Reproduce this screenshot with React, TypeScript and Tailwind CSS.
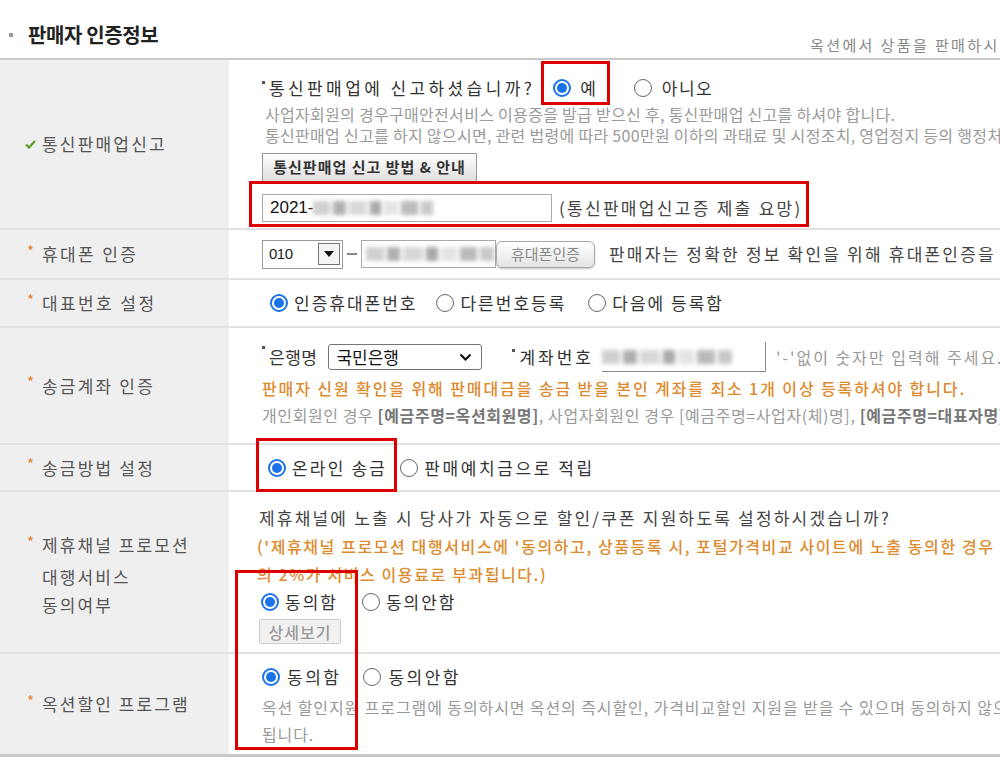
import React from 'react';

const Radio: React.FC<{ checked?: boolean }> = ({ checked }) =>
  checked ? (
    <span className="w-[18px] h-[18px] rounded-full border-2 border-[#1a73e8] bg-white flex items-center justify-center shrink-0">
      <span className="w-[10px] h-[10px] rounded-full bg-[#1a73e8]" />
    </span>
  ) : (
    <span className="w-[18px] h-[18px] rounded-full border-[1.5px] border-[#666] bg-white shrink-0" />
  );

const Option: React.FC<{ checked?: boolean; label: string; className?: string }> = ({ checked, label, className }) => (
  <span className={`flex items-center gap-[6px] ${className ?? ''}`}>
    <Radio checked={checked} />
    <span>{label}</span>
  </span>
);

const Dot = () => <span className="w-[3px] h-[3px] bg-[#555] self-start mt-[5px] mr-[4px] shrink-0" />;

const Star = () => <span className="text-[#e8822e] text-[15px] w-[15px] mb-[6px] shrink-0">*</span>;

// blurred-out personal data
const Blur: React.FC<{ w: number }> = ({ w }) => (
  <span className="flex items-center gap-[3px] blur-[2px]" style={{ width: w }}>
    <span className="w-[18px] h-[14px] bg-[#d0d0d0]" />
    <span className="w-[14px] h-[14px] bg-[#b0b0b0]" />
    <span className="w-[20px] h-[14px] bg-[#d8d8d8]" />
    <span className="w-[12px] h-[14px] bg-[#a9a9a9]" />
    <span className="w-[16px] h-[14px] bg-[#e4e4e4]" />
    <span className="w-[18px] h-[14px] bg-[#bababa]" />
    <span className="w-[14px] h-[14px] bg-[#c8c8c8]" />
  </span>
);

const App: React.FC = () => {
  return (
    <div className="relative w-[1000px] h-[771px] overflow-hidden bg-white whitespace-nowrap font-['Noto_Sans_CJK_KR','Malgun_Gothic',sans-serif] text-[#333]">
      {/* header */}
      <div className="flex items-end h-[58px]">
        <div className="w-[810px] shrink-0 flex items-center pl-[9px] pb-[8px]">
          <span className="w-[4px] h-[4px] bg-[#999] mr-[15px]" />
          <span className="text-[20px] font-bold tracking-[-0.4px] text-[#222]">판매자 인증정보</span>
        </div>
        <div className="pb-[2px] text-[15px] tracking-[2.4px] text-[#888]">옥션에서 상품을 판매하시려면 판매자 인증이 필요합니다.</div>
      </div>

      <div className="border-t-2 border-[#c9c9c9]">
        {/* 통신판매업신고 */}
        <div className="flex h-[170px] border-b-2 border-[#e2e2e2]">
          <div className="w-[229px] shrink-0 bg-[#efefef] flex items-center pl-[25px] text-[17px] tracking-[2.2px] text-[#555]">
            <svg width="11" height="9" viewBox="0 0 11 9" className="mr-[6px]">
              <path d="M1 4.5 L4 7.5 L10 1" fill="none" stroke="#5f9e2c" strokeWidth="2.2" />
            </svg>
            통신판매업신고
          </div>
          <div className="flex-1 pl-[33px] pt-[16px] flex flex-col">
            <div className="flex items-center h-[24px] text-[17px]">
              <Dot />
              <span className="tracking-[3.4px]">통신판매업에 신고하셨습니까?</span>
              <Option checked label="예" className="ml-[18px] gap-[9px]" />
              <Option label="아니오" className="ml-[38px] gap-[10px] tracking-[1.5px]" />
            </div>
            <div className="mt-[4px] text-[16px] leading-[21px] tracking-[0.3px] text-[#9a9a9a] pl-[3px]">
              <div>사업자회원의 경우구매안전서비스 이용증을 발급 받으신 후, 통신판매업 신고를 하셔야 합니다.</div>
              <div>통신판매업 신고를 하지 않으시면, 관련 법령에 따라 500만원 이하의 과태료 및 시정조치, 영업정지 등의 행정처분을 받을 수 있습니다.</div>
            </div>
            <button className="mt-[7px] w-[215px] h-[29px] border border-[#999] bg-gradient-to-b from-white to-[#dedede] text-[15px] font-bold tracking-[1px] text-[#333] flex items-center justify-center">
              통신판매업 신고 방법 &amp; 안내
            </button>
            <div className="mt-[12px] flex items-center">
              <div className="w-[290px] h-[28px] border border-[#aaa] flex items-center pl-[7px] text-[17px] text-[#111] font-['Liberation_Sans',sans-serif]">
                2021-
                <Blur w={120} />
              </div>
              <span className="ml-[7px] text-[17px] tracking-[2.3px] text-[#444]">(통신판매업신고증 제출 요망)</span>
            </div>
          </div>
        </div>

        {/* 휴대폰 인증 */}
        <div className="flex h-[50px] border-b-2 border-[#e2e2e2]">
          <div className="w-[229px] shrink-0 bg-[#efefef] flex items-center pl-[27px] text-[17px] tracking-[2.4px] text-[#555]">
            <Star />
            휴대폰 인증
          </div>
          <div className="flex-1 pl-[33px] flex items-center">
            <div className="w-[81px] h-[29px] border border-[#999] flex items-center justify-between pl-[6px] pr-[2px]">
              <span className="text-[15px] tracking-[-0.5px] text-[#222] font-['Liberation_Sans',sans-serif]">010</span>
              <span className="w-[22px] h-[22px] border border-[#777] bg-[#f4f4f4] flex items-center justify-center">
                <svg width="10" height="6" viewBox="0 0 10 6">
                  <path d="M0 0 H10 L5 6 Z" fill="#111" />
                </svg>
              </span>
            </div>
            <span className="mx-[4px] w-[10px] h-[1.5px] bg-[#888]" />
            <div className="w-[135px] h-[28px] border border-[#aaa] flex items-center pl-[4px]">
              <Blur w={128} />
            </div>
            <button className="w-[99px] h-[27px] rounded-[6px] border border-[#aaa] bg-gradient-to-b from-white to-[#e4e4e4] shadow-[0_1px_2px_rgba(0,0,0,0.25)] text-[15px] text-[#8a8a8a] flex items-center justify-center">
              휴대폰인증
            </button>
            <span className="ml-[14px] text-[17px] tracking-[2.2px] text-[#444]">판매자는 정확한 정보 확인을 위해 휴대폰인증을 하셔야 합니다.</span>
          </div>
        </div>

        {/* 대표번호 설정 */}
        <div className="flex h-[48px] border-b-2 border-[#e2e2e2]">
          <div className="w-[229px] shrink-0 bg-[#efefef] flex items-center pl-[27px] text-[17px] tracking-[2.4px] text-[#555]">
            <Star />
            대표번호 설정
          </div>
          <div className="flex-1 pl-[41px] flex items-center text-[17px] tracking-[2px]">
            <Option checked label="인증휴대폰번호" />
            <Option label="다른번호등록" className="ml-[19px] gap-[5px]" />
            <Option label="다음에 등록함" className="ml-[22px] gap-[5px]" />
          </div>
        </div>

        {/* 송금계좌 인증 */}
        <div className="flex h-[117px] border-b-2 border-[#e2e2e2]">
          <div className="w-[229px] shrink-0 bg-[#efefef] flex items-center pl-[27px] text-[17px] tracking-[2.2px] text-[#555]">
            <Star />
            송금계좌 인증
          </div>
          <div className="flex-1 pl-[33px] pt-[13px] flex flex-col">
            <div className="flex items-center h-[32px] text-[17px]">
              <Dot />
              <span className="tracking-[0.5px]">은행명</span>
              <div className="ml-[11px] w-[154px] h-[26px] border border-[#767676] rounded-[3px] flex items-center justify-between pl-[7px] pr-[9px]">
                <span className="text-[#111]">국민은행</span>
                <svg width="13" height="8" viewBox="0 0 13 8">
                  <path d="M1.5 1.5 L6.5 6.5 L11.5 1.5" fill="none" stroke="#111" strokeWidth="2.2" />
                </svg>
              </div>
              <span className="ml-[30px] flex">
                <Dot />
                <span className="tracking-[3px]">계좌번호</span>
              </span>
              <div className="ml-[8px] w-[164px] h-[30px] border-r border-b border-[#888] flex items-center">
                <Blur w={150} />
              </div>
              <span className="ml-[10px] text-[16px] tracking-[2px] text-[#999]">'-'없이 숫자만 입력해 주세요.</span>
            </div>
            <div className="mt-[4px] leading-[22px] text-[16px] tracking-[1.9px] font-medium text-[#dd8a2e]">
              판매자 신원 확인을 위해 판매대금을 송금 받을 본인 계좌를 최소 1개 이상 등록하셔야 합니다.
            </div>
            <div className="mt-[5px] leading-[22px] text-[16px] tracking-[0.6px] text-[#999]">
              개인회원인 경우 <b className="text-[#777]">[예금주명=옥션회원명]</b>, 사업자회원인 경우 [예금주명=사업자(체)명], <b className="text-[#777]">[예금주명=대표자명]</b>
            </div>
          </div>
        </div>

        {/* 송금방법 설정 */}
        <div className="flex h-[47px] border-b-2 border-[#e2e2e2]">
          <div className="w-[229px] shrink-0 bg-[#efefef] flex items-center pl-[27px] text-[17px] tracking-[2.2px] text-[#555]">
            <Star />
            송금방법 설정
          </div>
          <div className="flex-1 pl-[39px] flex items-center text-[17px] tracking-[2.2px]">
            <Option checked label="온라인 송금" />
            <Option label="판매예치금으로 적립" className="ml-[13px] gap-[5px] tracking-[2.6px]" />
          </div>
        </div>

        {/* 제휴채널 프로모션 */}
        <div className="flex h-[162px] border-b-2 border-[#e2e2e2]">
          <div className="w-[229px] shrink-0 bg-[#efefef] flex items-center pl-[27px] text-[17px] tracking-[2.1px] text-[#555]">
            <div className="flex flex-col leading-[28.5px] pt-[4px]">
              <div className="flex items-center">
                <Star />
                제휴채널 프로모션
              </div>
              <div className="pl-[15px]">대행서비스</div>
              <div className="pl-[15px]">동의여부</div>
            </div>
          </div>
          <div className="flex-1 pl-[30px] pt-[12px] flex flex-col">
            <div className="leading-[28px] text-[17px] tracking-[2.2px] text-[#444]">제휴채널에 노출 시 당사가 자동으로 할인/쿠폰 지원하도록 설정하시겠습니까?</div>
            <div className="leading-[28px] text-[16px] tracking-[1.6px] font-medium text-[#dd8a2e] -ml-[2px]">
              <div>('제휴채널 프로모션 대행서비스에 '동의하고, 상품등록 시, 포털가격비교 사이트에 노출 동의한 경우 판매금액</div>
              <div>의 2%가 서비스 이용료로 부과됩니다.)</div>
            </div>
            <div className="h-[28px] flex items-center text-[17px] tracking-[2px] pl-[2px]">
              <Option checked label="동의함" />
              <Option label="동의안함" className="ml-[24px] gap-[5px]" />
            </div>
            <button className="mt-[3px] w-[82px] h-[25px] border border-[#ccc] rounded-[2px] bg-[#f1f1f1] text-[16px] font-medium tracking-[1px] text-[#999] flex items-center justify-center">
              상세보기
            </button>
          </div>
        </div>

        {/* 옥션할인 프로그램 */}
        <div className="flex h-[103px] border-b-[3px] border-[#c8c8c8]">
          <div className="w-[229px] shrink-0 bg-[#efefef] flex items-center pl-[27px] text-[17px] tracking-[2.1px] text-[#555]">
            <Star />
            옥션할인 프로그램
          </div>
          <div className="flex-1 pl-[33px] pt-[9px] flex flex-col">
            <div className="h-[28px] flex items-center text-[17px] tracking-[2.5px]">
              <Option checked label="동의함" className="gap-[7px]" />
              <Option label="동의안함" className="ml-[22px] gap-[7px]" />
            </div>
            <div className="mt-[3px] leading-[27px] text-[16px] tracking-[0.9px] text-[#999]">
              <div>옥션 할인지원 프로그램에 동의하시면 옥션의 즉시할인, 가격비교할인 지원을 받을 수 있으며 동의하지 않으시면 할인지원 대상에서 제외</div>
              <div>됩니다.</div>
            </div>
          </div>
        </div>
      </div>

      {/* red annotation boxes */}
      <div className="absolute left-[541px] top-[61px] w-[69px] h-[44px] border-[3px] border-[#dd0000]" />
      <div className="absolute left-[249px] top-[181px] w-[560px] h-[46px] border-[3px] border-[#dd0000]" />
      <div className="absolute left-[256px] top-[438px] w-[141px] h-[54px] border-[3px] border-[#dd0000]" />
      <div className="absolute left-[235px] top-[570px] w-[123px] h-[180px] border-[3px] border-[#dd0000]" />
    </div>
  );
};

export default App;
